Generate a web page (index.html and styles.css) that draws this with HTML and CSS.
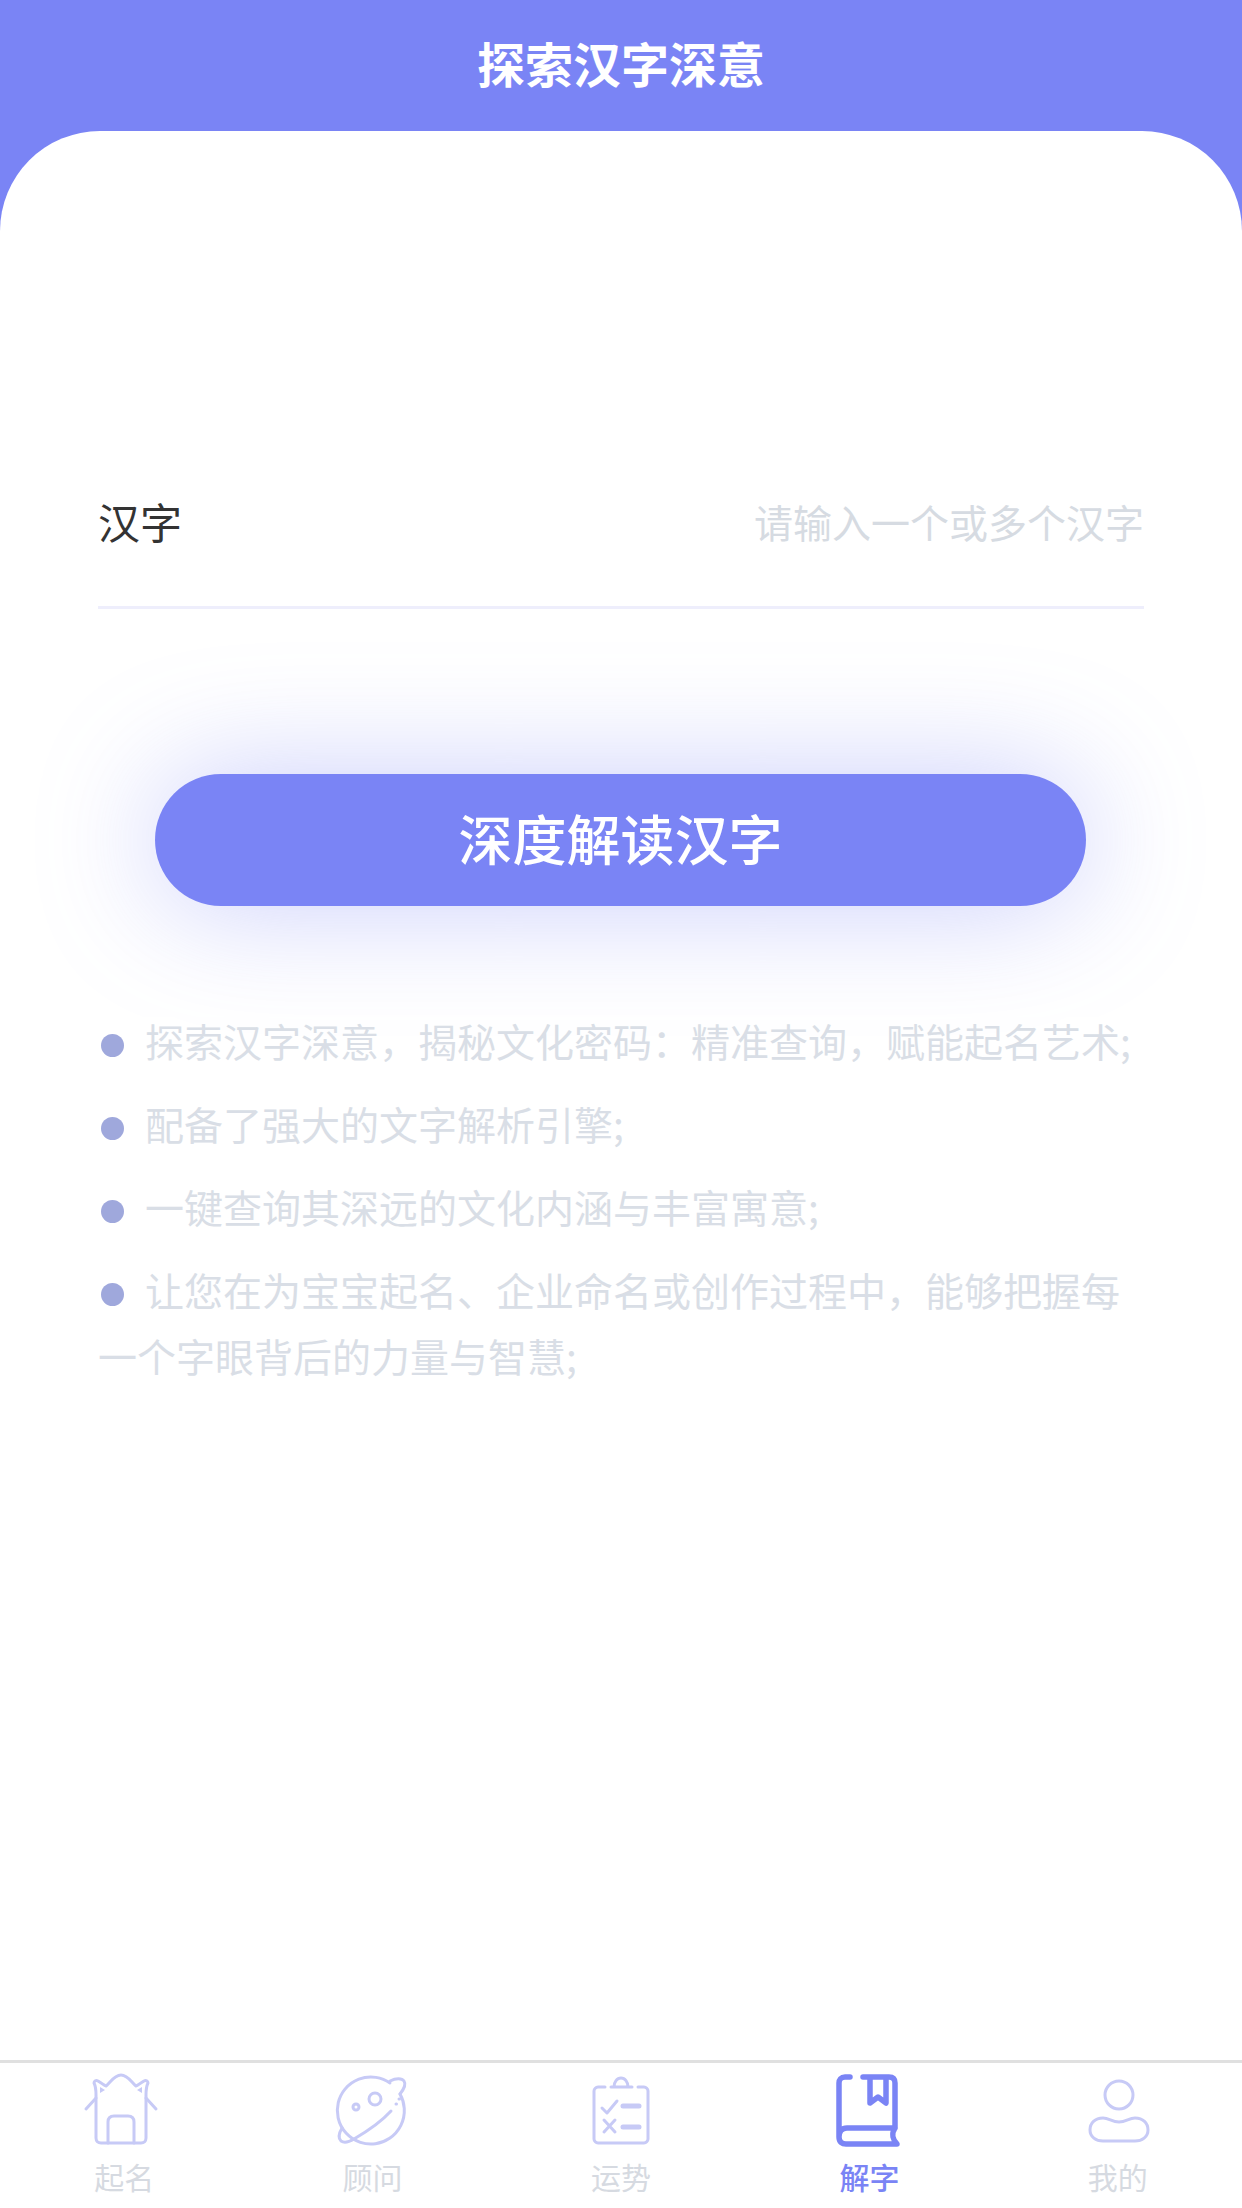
FILE: index.html
```html
<!DOCTYPE html>
<html lang="zh-CN">
<head>
<meta charset="utf-8">
<title>探索汉字深意</title>
<link rel="stylesheet" href="styles.css">
</head>
<body>
<div class="app">
  <header class="topbar"><h1 class="topbar-title">探索汉字深意</h1></header>
  <main class="card">
    <label class="field">
      <span class="field-label">汉字</span>
      <input class="field-input" type="text" placeholder="请输入一个或多个汉字">
    </label>
    <button class="submit" type="button">深度解读汉字</button>
    <ul class="notes">
      <li class="note"><i class="dot"></i>探索汉字深意，揭秘文化密码：精准查询，赋能起名艺术;</li>
      <li class="note"><i class="dot"></i>配备了强大的文字解析引擎;</li>
      <li class="note"><i class="dot"></i>一键查询其深远的文化内涵与丰富寓意;</li>
      <li class="note"><i class="dot"></i>让您在为宝宝起名、企业命名或创作过程中，能够把握每一个字眼背后的力量与智慧;</li>
    </ul>
  </main>
  <nav class="tabs">
    <a class="tab">
      <svg class="tab-icon" viewBox="0 0 90 90">
        <path class="line" d="M7 44 17 33M77 44 67 33"/>
        <path class="line" d="M17 30C17 24 16 20 15 18C15 16 17 15 19 16C22 18 25 20 27 21C31 18 35 10 42 10C49 10 53 18 57 21C59 20 62 18 65 16C67 15 69 16 69 18C68 20 67 24 67 30V73C67 76 65 78 62 78H22C19 78 17 76 17 73Z"/>
        <path class="line" d="M29 78V57C29 53 31 51 35 51H49C53 51 55 53 55 57V78"/>
        <path class="tip" d="M21 22 26 25 21 28ZM63 22 58 25 63 28Z"/>
      </svg>
      <span class="tab-label">起名</span>
    </a>
    <a class="tab">
      <svg class="tab-icon" viewBox="0 0 90 90">
        <path class="line" d="M72 29A33.5 33.5 0 1 1 62 18"/>
        <path class="line" d="M62 16C68 13 74 13 76 16C78 19 76 24 72 29"/>
        <path class="line" d="M14 63C11 68 10 73 13 76C16 78 21 77 26 74C38 67 53 57 63 46"/>
        <circle class="line" cx="47" cy="34" r="6"/>
        <circle class="line" cx="28" cy="42" r="3"/>
        <path class="line" d="M68 39h.5M71 34h.5"/>
      </svg>
      <span class="tab-label">顾问</span>
    </a>
    <a class="tab">
      <svg class="tab-icon" viewBox="0 0 90 90">
        <path class="line" d="M29 22H22C20 22 18 24 18 26V74C18 76 20 78 22 78H68C70 78 72 76 72 74V26C72 24 70 22 68 22H62"/>
        <path class="line" d="M35 22H56M38 22C38 17 41 13 45 13C49 13 52 17 52 22"/>
        <path class="line" d="M26 43 31 48 41 36M28 55 39 67M39 55 28 67"/>
        <path class="line thick" d="M47 41H63M47 62H63"/>
      </svg>
      <span class="tab-label">运势</span>
    </a>
    <a class="tab tab-active">
      <svg class="tab-icon" viewBox="0 0 90 90">
        <path class="line heavy" d="M26 12H21C17 12 15 15 15 18V72M15 72C15 66 18 63 23 63H71V18C71 14 69 12 65 12H39M46 12V38L54 32 62 38V12M15 72C15 77 18 79 22 79H73C69 75 67 69 71 63"/>
      </svg>
      <span class="tab-label">解字</span>
    </a>
    <a class="tab">
      <svg class="tab-icon" viewBox="0 0 90 90">
        <circle class="line" cx="46" cy="30" r="14"/>
        <path class="line" d="M30 53C36 53 39 57 46 57C53 57 56 53 62 53C70 53 75 58 75 65C75 72 69 76 62 76H30C23 76 17 72 17 65C17 58 22 53 30 53Z"/>
      </svg>
      <span class="tab-label">我的</span>
    </a>
  </nav>
</div>
</body>
</html>
```
FILE: styles.css
```css
* {
  box-sizing: border-box;
}

html,
body {
  margin: 0;
  height: 100%;
}

body {
  font-family: "Noto Sans CJK SC", "Noto Sans", sans-serif;
  background: #fff;
}

.app {
  display: flex;
  flex-direction: column;
  height: 2208px;
  background: #7a84f5;
}

.topbar {
  flex: none;
  height: 131px;
  padding-bottom: 8px;
  display: flex;
  align-items: center;
  justify-content: center;
}

.topbar-title {
  margin: 0;
  font-size: 48px;
  font-weight: 700;
  line-height: 1;
  color: #fff;
}

/* White sheet with large rounded shoulders under the title bar */
.card {
  flex: 1;
  min-height: 0;
  padding: 310px 98px 0;
  background: #fff;
  border-radius: 100px 100px 0 0;
}

.field {
  display: flex;
  align-items: center;
  justify-content: space-between;
  height: 168px;
  padding-bottom: 6px;
  border-bottom: 3px solid #eeeefc;
}

.field-label {
  font-size: 42px;
  color: #333;
}

.field-input {
  flex: 1;
  min-width: 0;
  padding: 0;
  border: 0;
  outline: 0;
  background: transparent;
  font: inherit;
  font-size: 39px;
  text-align: right;
  color: #333;
}

.field-input::placeholder {
  color: #d6dbe2;
  opacity: 1;
}

.submit {
  display: block;
  width: 931px;
  height: 132px;
  margin: 165px 0 0 57px;
  padding: 0 0 6px;
  border: 0;
  border-radius: 66px;
  background: #7a84f5;
  box-shadow: 0 0 120px rgba(122, 132, 245, 0.4);
  font: inherit;
  font-size: 54px;
  font-weight: 500;
  color: #fff;
}

.notes {
  margin: 101px 0 0;
  padding: 0;
  list-style: none;
}

.note {
  margin-bottom: 17px;
  font-size: 39px;
  line-height: 66px;
  color: #d9dee6;
}

.dot {
  display: inline-block;
  width: 23px;
  height: 23px;
  margin: 0 21px 0 3px;
  border-radius: 50%;
  background: #9fa8dc;
}

.tabs {
  flex: none;
  display: grid;
  grid-template-columns: repeat(5, 1fr);
  height: 148px;
  border-top: 3px solid #e0e0e0;
  background: #fff;
}

.tab {
  display: flex;
  flex-direction: column;
  align-items: center;
  padding-top: 2px;
}

.tab-icon {
  display: block;
  width: 90px;
  height: 90px;
  color: #c7caf6;
}

.tab-label {
  margin-top: 1px;
  font-size: 30px;
  line-height: 40px;
  color: #d6dae1;
}

.tab-active .tab-icon {
  color: #7a84f5;
}

.tab-active .tab-label {
  font-weight: 500;
  color: #7a84f5;
}

.line {
  fill: none;
  stroke: currentColor;
  stroke-width: 3;
  stroke-linecap: round;
  stroke-linejoin: round;
}

.thick {
  stroke-width: 5;
}

.heavy {
  stroke-width: 5.5;
}

.tip {
  fill: currentColor;
}
```
